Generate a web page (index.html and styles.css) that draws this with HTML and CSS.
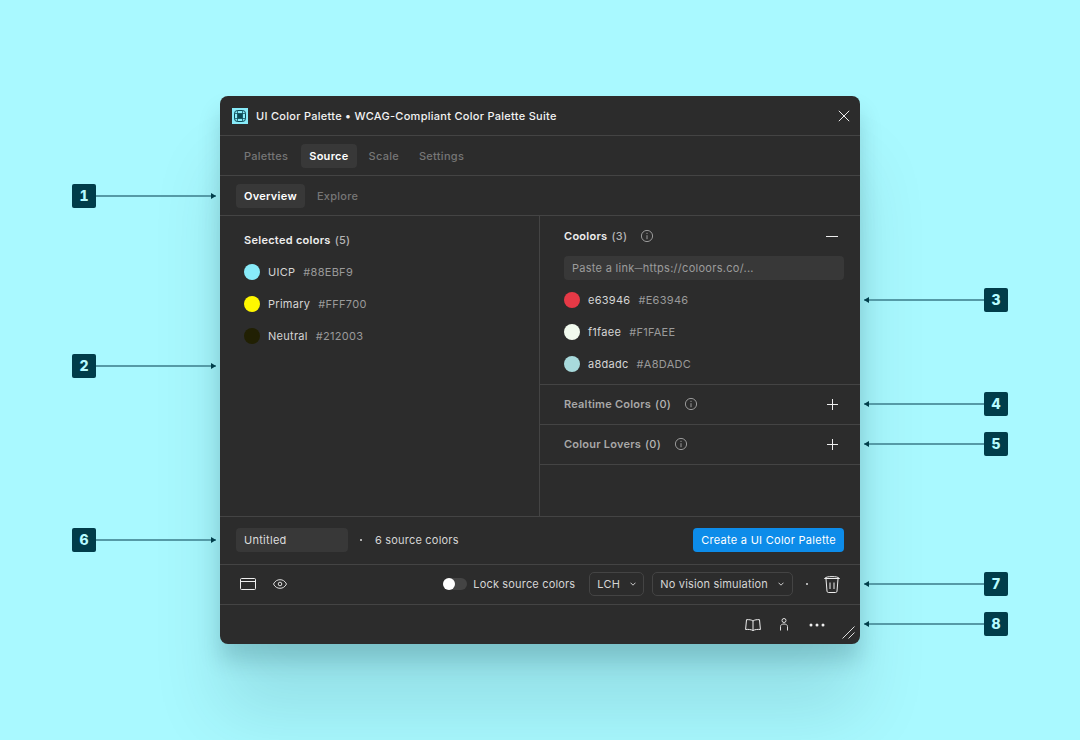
FILE: index.html
```html
<!DOCTYPE html>
<html lang="en">
<head>
    <meta charset="UTF-8">
    <title>UI Color Palette</title>
    <link rel="stylesheet" href="styles.css">
</head>
<body>
    <div class="window">
        <div class="titlebar">
            <svg class="logo" width="16" height="16" viewBox="0 0 16 16">
                <rect width="16" height="16" fill="#88ebf9"/>
                <rect x="2.5" y="2.5" width="11" height="11" rx="3" fill="none" stroke="#0c4a55"/>
                <path d="M5.5 2.500v11M10.500 2.500v11M2.500 5.500h11M2.500 10.500h11" stroke="#0c4a55" stroke-opacity=".75"/>
                <rect x="5.500" y="5.500" width="5" height="5" fill="#0c4a55"/>
            </svg>
            <span class="title">UI Color Palette • WCAG-Compliant Color Palette Suite</span>
            <svg class="close" width="12" height="12" viewBox="0 0 12 12"><path d="M.8.8l10.400 10.400M11.200.8L.8 11.200" stroke="#eee" stroke-width="1"/></svg>
        </div>

        <div class="tabs main-tabs">
            <span class="tab">Palettes</span>
            <span class="tab active">Source</span>
            <span class="tab">Scale</span>
            <span class="tab">Settings</span>
        </div>

        <div class="tabs sub-tabs">
            <span class="tab active">Overview</span>
            <span class="tab">Explore</span>
        </div>

        <div class="content">
            <div class="left">
                <div class="left-head"><b>Selected colors</b><span class="count">(5)</span></div>
                <div class="color"><i class="dot" style="background:#88ebf9"></i><span class="name">UICP</span><span class="hex">#88EBF9</span></div>
                <div class="color"><i class="dot" style="background:#fff700"></i><span class="name">Primary</span><span class="hex">#FFF700</span></div>
                <div class="color"><i class="dot" style="background:#212003"></i><span class="name">Neutral</span><span class="hex">#212003</span></div>
            </div>
            <div class="right">
                <div class="section open">
                    <div class="sec-head">
                        <b>Coolors</b><span class="count">(3)</span>
                        <svg class="info" width="14" height="14" viewBox="0 0 14 14"><circle cx="7" cy="7" r="5.600" fill="none" stroke="#999"/><path d="M7 6.200v4M7 3.800v1.200" stroke="#999"/></svg>
                        <svg class="toggle" width="12" height="12" viewBox="0 0 12 12"><path d="M0 6.500h12" stroke="#eee"/></svg>
                    </div>
                    <div class="link-input">Paste a link<span class="dash">—</span>https://coloors.co/...</div>
                    <div class="color"><i class="dot" style="background:#e63946"></i><span class="name">e63946</span><span class="hex">#E63946</span></div>
                    <div class="color"><i class="dot" style="background:#f1faee"></i><span class="name">f1faee</span><span class="hex">#F1FAEE</span></div>
                    <div class="color"><i class="dot" style="background:#a8dadc"></i><span class="name">a8dadc</span><span class="hex">#A8DADC</span></div>
                </div>
                <div class="section closed">
                    <div class="sec-head">
                        <b>Realtime Colors</b><span class="count">(0)</span>
                        <svg class="info" width="14" height="14" viewBox="0 0 14 14"><circle cx="7" cy="7" r="5.600" fill="none" stroke="#999"/><path d="M7 6.200v4M7 3.800v1.200" stroke="#999"/></svg>
                        <svg class="toggle" width="11" height="11" viewBox="0 0 11 11"><path d="M0 5.500h11M5.500 0v11" stroke="#eee"/></svg>
                    </div>
                </div>
                <div class="section closed">
                    <div class="sec-head">
                        <b>Colour Lovers</b><span class="count">(0)</span>
                        <svg class="info" width="14" height="14" viewBox="0 0 14 14"><circle cx="7" cy="7" r="5.600" fill="none" stroke="#999"/><path d="M7 6.200v4M7 3.800v1.200" stroke="#999"/></svg>
                        <svg class="toggle" width="11" height="11" viewBox="0 0 11 11"><path d="M0 5.500h11M5.500 0v11" stroke="#eee"/></svg>
                    </div>
                </div>
            </div>
        </div>

        <div class="create-bar">
            <div class="name-input">Untitled</div>
            <i class="sep"></i>
            <span class="source-count">6 source colors</span>
            <button class="create">Create a UI Color Palette</button>
        </div>

        <div class="action-bar">
            <svg class="ico-card" width="16" height="12" viewBox="0 0 16 12"><rect x=".5" y=".5" width="15" height="11" rx="1" fill="none" stroke="#eee"/><path d="M.5 3.500h15" stroke="#eee"/></svg>
            <svg class="ico-eye" width="14" height="10" viewBox="0 0 14 10"><path d="M.5 5C2 2 4.300.7 7 .7S12 2 13.500 5C12 8 9.700 9.300 7 9.300S2 8 .5 5z" fill="none" stroke="#ddd"/><circle cx="7" cy="5" r="1.800" fill="none" stroke="#ddd"/></svg>
            <div class="switch"><i></i></div>
            <span class="lock-label">Lock source colors</span>
            <div class="select lch">LCH<svg width="6" height="4" viewBox="0 0 6 4"><path d="M.5.7L3 3.200 5.500.7" fill="none" stroke="#ccc"/></svg></div>
            <div class="select vision">No vision simulation<svg width="6" height="4" viewBox="0 0 6 4"><path d="M.5.7L3 3.200 5.500.7" fill="none" stroke="#ccc"/></svg></div>
            <i class="sep"></i>
            <svg class="ico-trash" width="16" height="17" viewBox="0 0 16 17"><path d="M.5 2.500C2 1 4 .6 8 .6s6 .4 7.500 1.900M.5 2.500h15M2 3l1 12.200c.1.800.6 1.300 1.400 1.300h7.200c.8 0 1.300-.5 1.400-1.300L14 3M6 6.500v6.500M10 6.500v6.500" fill="none" stroke="#eee"/></svg>
        </div>

        <div class="bottom-bar">
            <svg class="ico-book" width="16" height="12" viewBox="0 0 16 12"><path d="M8 2C6.500.8 4 .5 1.500.7L.6 10.500c2.700-.3 5.500 0 7.400 1 1.900-1 4.700-1.300 7.400-1L14.500.7C12 .5 9.500.8 8 2zM8 2v9.500" fill="none" stroke="#eee"/></svg>
            <svg class="ico-person" width="10" height="13" viewBox="0 0 10 13"><circle cx="5" cy="2.500" r="2" fill="none" stroke="#ddd"/><path d="M1.500 12.500V8.500c0-1.600 1.500-2.500 3.500-2.500s3.500.9 3.500 2.500v4" fill="none" stroke="#ddd"/></svg>
            <svg class="ico-more" width="16" height="4" viewBox="0 0 16 4"><circle cx="2" cy="2" r="1.500" fill="#eee"/><circle cx="8" cy="2" r="1.500" fill="#eee"/><circle cx="14" cy="2" r="1.500" fill="#eee"/></svg>
            <svg class="grip" width="13" height="13" viewBox="0 0 13 13"><path d="M.5 12.500l12-12M6.500 12.500l6-6" stroke="#ddd"/></svg>
        </div>
    </div>

    <!-- callouts -->
    <div class="note left-note n1"><span class="badge">1</span><span class="line"></span></div>
    <div class="note left-note n2"><span class="badge">2</span><span class="line"></span></div>
    <div class="note right-note n3"><span class="line"></span><span class="badge">3</span></div>
    <div class="note right-note n4"><span class="line"></span><span class="badge">4</span></div>
    <div class="note right-note n5"><span class="line"></span><span class="badge">5</span></div>
    <div class="note left-note n6"><span class="badge">6</span><span class="line"></span></div>
    <div class="note right-note n7"><span class="line"></span><span class="badge">7</span></div>
    <div class="note right-note n8"><span class="line"></span><span class="badge">8</span></div>
</body>
</html>
```

FILE: styles.css
```css
* {
    box-sizing: border-box;
}

html, body {
    height: 740px;
    margin: 0;
    overflow: hidden;
}

body {
    position: relative;
    padding-top: 96px;
    background-color: #a9f9ff;
    font-family: Inter, "Liberation Sans", sans-serif;
    font-size: 11px;
    letter-spacing: 0.28px;
    color: #fff;
}

.window {
    width: 640px;
    height: 548px;
    margin: 0 auto;
    background-color: #2c2c2c;
    border-radius: 8px;
    display: flex;
    flex-direction: column;
    box-shadow: 0 16px 22px rgba(0, 50, 60, 0.18), 0 70px 70px rgba(0, 50, 60, 0.12);
}

.titlebar {
    height: 40px;
    flex: none;
    display: flex;
    align-items: center;
    padding: 0 10px 0 12px;
    border-bottom: 1px solid #444;
}

.logo {
    margin-right: 8px;
}

.title {
    font-weight: 500;
    color: #f2f2f2;
}

.close {
    margin-left: auto;
}

.tabs {
    height: 40px;
    flex: none;
    display: flex;
    align-items: center;
    gap: 4px;
    padding: 0 16px;
    border-bottom: 1px solid #444;
}

.tab {
    height: 24px;
    line-height: 24px;
    padding: 0 8px;
    border-radius: 4px;
    color: #767676;
    font-weight: 500;
}

.main-tabs .tab:first-child {
    padding-right: 9px;
}

.tab.active {
    background-color: #383838;
    color: #fff;
    font-weight: 600;
}

.content {
    flex: 1;
    display: flex;
    min-height: 0;
}

.left {
    width: 320px;
    padding: 8px 24px;
    border-right: 1px solid #444;
}

.left-head {
    height: 32px;
    display: flex;
    align-items: center;
}

.left-head b {
    font-weight: 600;
    color: #eee;
}

.count {
    margin-left: 4px;
    color: #b5b5b5;
    font-weight: 500;
}

.color {
    height: 32px;
    display: flex;
    align-items: center;
}

.dot {
    width: 16px;
    height: 16px;
    border-radius: 50%;
    margin-right: 8px;
}

.name {
    color: #d5d5d5;
    margin-right: 8px;
}

.hex {
    color: #9a9a9a;
}

.right {
    width: 320px;
}

.section {
    border-bottom: 1px solid #444;
}

.open {
    height: 169px;
    padding: 0 16px 0 24px;
}

.closed {
    height: 40px;
    padding: 0 16px 0 24px;
}

.sec-head {
    height: 40px;
    display: flex;
    align-items: center;
    padding-right: 6px;
}

.closed .sec-head {
    height: 38px;
}

.closed .toggle {
    margin-top: 1px;
}

.sec-head b {
    font-weight: 600;
    color: #a8a8a8;
}

.closed .sec-head b {
    letter-spacing: 0.22px;
}

.open .sec-head b {
    color: #eee;
}

.info {
    margin-left: 13px;
}

.toggle {
    margin-left: auto;
}

.link-input {
    height: 24px;
    line-height: 24px;
    padding: 0 8px;
    border-radius: 4px;
    background-color: #383838;
    color: #9c9c9c;
    margin-bottom: 4px;
}

.dash {
    font-size: 8px;
    vertical-align: 1px;
}

.create-bar {
    height: 49px;
    flex: none;
    display: flex;
    align-items: center;
    padding: 0 16px 1px;
    border-top: 1px solid #444;
    border-bottom: 1px solid #444;
}

.name-input {
    width: 112px;
    height: 24px;
    line-height: 24px;
    padding: 0 8px;
    border-radius: 4px;
    background-color: #383838;
    color: #ddd;
}

.sep {
    width: 2px;
    height: 2px;
    border-radius: 50%;
    background-color: #ddd;
    margin: 0 13px 0 12px;
}

.source-count {
    color: #d5d5d5;
    letter-spacing: 0.2px;
}

.create {
    margin-left: auto;
    height: 24px;
    padding: 0 8px;
    border: 0;
    border-radius: 4px;
    background-color: #0d8ce9;
    color: #fff;
    font: inherit;
    letter-spacing: inherit;
}

.action-bar {
    height: 40px;
    flex: none;
    display: flex;
    align-items: center;
    padding: 0 20px 1px;
    border-bottom: 1px solid #444;
}

.action-bar .sep {
    margin: 0 16px 0 13px;
}

.ico-eye {
    margin-left: 17px;
}

.switch {
    width: 24px;
    height: 12px;
    margin-left: auto;
    border-radius: 6px;
    background-color: #444;
}

.switch i {
    display: block;
    width: 12px;
    height: 12px;
    border-radius: 50%;
    background-color: #fff;
}

.lock-label {
    color: #d5d5d5;
    letter-spacing: 0.17px;
    margin-left: 6px;
    margin-right: 14px;
}

.select {
    height: 24px;
    display: flex;
    align-items: center;
    gap: 10px;
    padding: 0 8px 0 7px;
    border: 1px solid #444;
    border-radius: 5px;
    color: #d5d5d5;
}

.vision {
    letter-spacing: 0.17px;
}

.lch {
    margin-right: 8px;
    padding-right: 7px;
}

.ico-trash {
    flex: none;
}

.bottom-bar {
    position: relative;
    height: 39px;
    flex: none;
    display: flex;
    align-items: center;
    justify-content: flex-end;
    padding: 0 35px 0 0;
}

.ico-person {
    margin-left: 18px;
}

.ico-more {
    margin-left: 20px;
}

.grip {
    position: absolute;
    right: 5px;
    bottom: 5px;
}

/* callouts around the window */
.note {
    position: absolute;
    height: 24px;
    display: flex;
    align-items: center;
}

.left-note {
    left: 72px;
    width: 144px;
}

.right-note {
    left: 864px;
    width: 144px;
}

.badge {
    width: 24px;
    height: 24px;
    flex: none;
    border-radius: 2px;
    background-color: #013d4a;
    color: #b8fbff;
    font-size: 14px;
    font-weight: 800;
    font-variant-numeric: tabular-nums;
    letter-spacing: 0;
    line-height: 24px;
    text-align: center;
}

.line {
    position: relative;
    flex: 1;
    height: 2px;
    background-color: #559aa6;
}

.line::after {
    content: "";
    position: absolute;
    top: -2px;
    border: 3px solid transparent;
}

.left-note .line::after {
    right: 0;
    border-left: 5px solid #013d4a;
    border-right: 0;
}

.right-note .line::after {
    left: 0;
    border-right: 5px solid #013d4a;
    border-left: 0;
}

.n1 { top: 184px; }
.n2 { top: 354px; }
.n3 { top: 288px; }
.n4 { top: 392px; }
.n5 { top: 432px; }
.n6 { top: 528px; }
.n7 { top: 572px; }
.n8 { top: 612px; }
```
